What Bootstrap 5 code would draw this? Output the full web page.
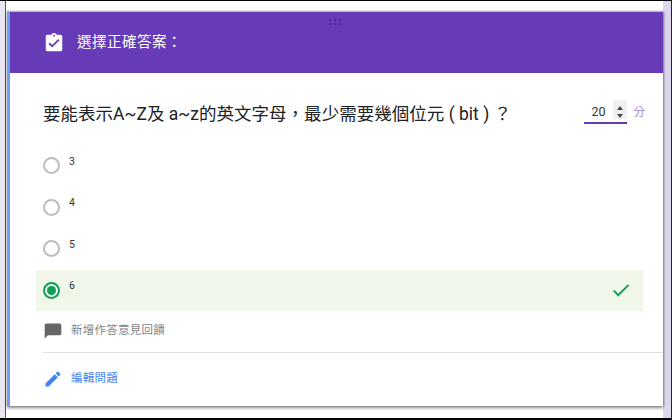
<!DOCTYPE html>
<html lang="zh-Hant">
<head>
<meta charset="utf-8">
<title>選擇正確答案</title>
<link href="https://cdn.jsdelivr.net/npm/bootstrap@5.3.0/dist/css/bootstrap.min.css" rel="stylesheet">
<style>
html,body{margin:0;height:420px;overflow:hidden;background:#fff}
body{font-family:Roboto,"Liberation Sans","Noto Sans CJK TC",sans-serif}
.frame{width:672px;height:420px;border-top:1px solid #000;border-bottom:2px solid #000;border-right:1px solid #222;background:linear-gradient(90deg,#e9e6f2 0,#e9e6f2 5px,#55525c 5px,#55525c 6px,#fff 6px,#fff 663px,#dcd6ec 663px);padding:10px 8px 0 7px}
.quiz{width:656px;height:395px;background:#fff;border-left:3px solid #6f9ff5;box-shadow:0 2px 3px rgba(0,0,0,.45),1px 0 2px rgba(0,0,0,.25);border-top:1px solid #bdbdbd}
.quiz-head{height:61px;background:#673ab7;color:#fff;font-size:14.5px;padding-left:33px;letter-spacing:.5px;position:relative}
.grip{position:absolute;left:319px;top:7px;width:14px;height:7px}
.q-row{padding:28px 0 0 33px;height:72px}
.q-text{font-size:17.5px;color:#202124;line-height:26px;letter-spacing:.02px;white-space:nowrap}
.score{margin-left:auto;margin-right:18px;gap:7px;font-size:12px}
.score-box{width:43px;height:23px;border-bottom:2px solid #673ab7;color:#333;font-size:12.5px;padding-left:8px;position:relative;line-height:21px}
.spin{position:absolute;right:0;top:-1px;width:14px;height:19px;background:#f0f0f0}
.unit{color:#9d86d4;font-size:11.5px}
.opt{height:41.5px;padding-left:33px;gap:9px;font-size:10.5px;color:#333;margin-right:16px}
.opt span{margin-top:-8px}
.opt-on{background:#f0f6e9;margin-left:26px;padding-left:7px;margin-right:20px;height:41px;padding-right:11px}
.ring{width:17px;height:17px;border:2px solid #bdbdbd;border-radius:50%;flex:none}
.ring-on{border-color:#0f9d58;padding:2px}
.ring-on i{display:block;width:9px;height:9px;border-radius:50%;background:#0f9d58}
.feedback{height:41px;padding-left:33px;gap:8px;color:#80868b;font-size:11.5px;letter-spacing:.25px}
.rule{height:1px;background:#e0e0e0;margin-left:33px}
.edit{height:53px;padding-left:33px;gap:8px;color:#4285f4;font-size:11.5px;letter-spacing:.25px}
</style>
</head>
<body>
<div class="frame">
<div class="quiz">
  <div class="quiz-head d-flex align-items-center gap-2">
    <svg class="grip" viewBox="0 0 14 7" aria-hidden="true"><g fill="#4f2a96"><rect x="0" y="0" width="2" height="2"/><rect x="5" y="0" width="2" height="2"/><rect x="10" y="0" width="2" height="2"/><rect x="0" y="4" width="2" height="2"/><rect x="5" y="4" width="2" height="2"/><rect x="10" y="4" width="2" height="2"/></g></svg>
    <svg width="22" height="22" viewBox="0 0 24 24" aria-hidden="true"><path fill="#fff" d="M19 3h-4.18C14.4 1.84 13.3 1 12 1s-2.4.84-2.82 2H5c-1.1 0-2 .9-2 2v14c0 1.1.9 2 2 2h14c1.1 0 2-.9 2-2V5c0-1.1-.9-2-2-2zm-7 0c.55 0 1 .45 1 1s-.45 1-1 1-1-.45-1-1 .45-1 1-1zm-2 14l-4-4 1.41-1.41L10 14.17l6.59-6.59L18 9l-8 8z"/></svg>
    <span class="ms-1">選擇正確答案：</span>
  </div>
  <div class="q-row d-flex align-items-start">
    <div class="q-text">要能表示A~Z及 a~z的英文字母，最少需要幾個位元 ( bit ) ？</div>
    <div class="score d-flex align-items-center">
      <div class="score-box">20
        <div class="spin"><svg width="14" height="19" viewBox="0 0 14 19" aria-hidden="true"><path fill="#444" d="M7 4l3 4H4zM7 16l-3-4h6z"/></svg></div>
      </div>
      <div class="unit">分</div>
    </div>
  </div>
  <div class="opt d-flex align-items-center"><div class="ring"></div><span>3</span></div>
  <div class="opt d-flex align-items-center"><div class="ring"></div><span>4</span></div>
  <div class="opt d-flex align-items-center"><div class="ring"></div><span>5</span></div>
  <div class="opt opt-on d-flex align-items-center"><div class="ring ring-on"><i></i></div><span>6</span>
    <svg class="ms-auto" width="22" height="22" viewBox="0 0 24 24" aria-hidden="true"><path fill="#0f9d58" d="M9 16.2L4.8 12l-1.4 1.4L9 19 21 7l-1.4-1.4z"/></svg>
  </div>
  <div class="feedback d-flex align-items-center">
    <svg width="20" height="20" viewBox="0 0 24 24" aria-hidden="true"><path fill="#666" d="M21 4c0-1.1-.9-2-2-2H3c-1.1 0-2 .9-2 2v16l4-4h14c1.1 0 2-.9 2-2z" transform="translate(1 1)"/></svg>
    <span>新增作答意見回饋</span>
  </div>
  <div class="rule"></div>
  <div class="edit d-flex align-items-center">
    <svg width="20" height="20" viewBox="0 0 24 24" aria-hidden="true"><path fill="#4285f4" d="M3 17.25V21h3.75L17.81 9.94l-3.75-3.75L3 17.25zM20.71 7.04a1 1 0 0 0 0-1.41l-2.34-2.34a1 1 0 0 0-1.41 0l-1.83 1.83 3.75 3.75 1.83-1.83z"/></svg>
    <span>編輯問題</span>
  </div>
</div>
</div>
<script src="https://cdn.jsdelivr.net/npm/bootstrap@5.3.0/dist/js/bootstrap.bundle.min.js"></script>
</body>
</html>
